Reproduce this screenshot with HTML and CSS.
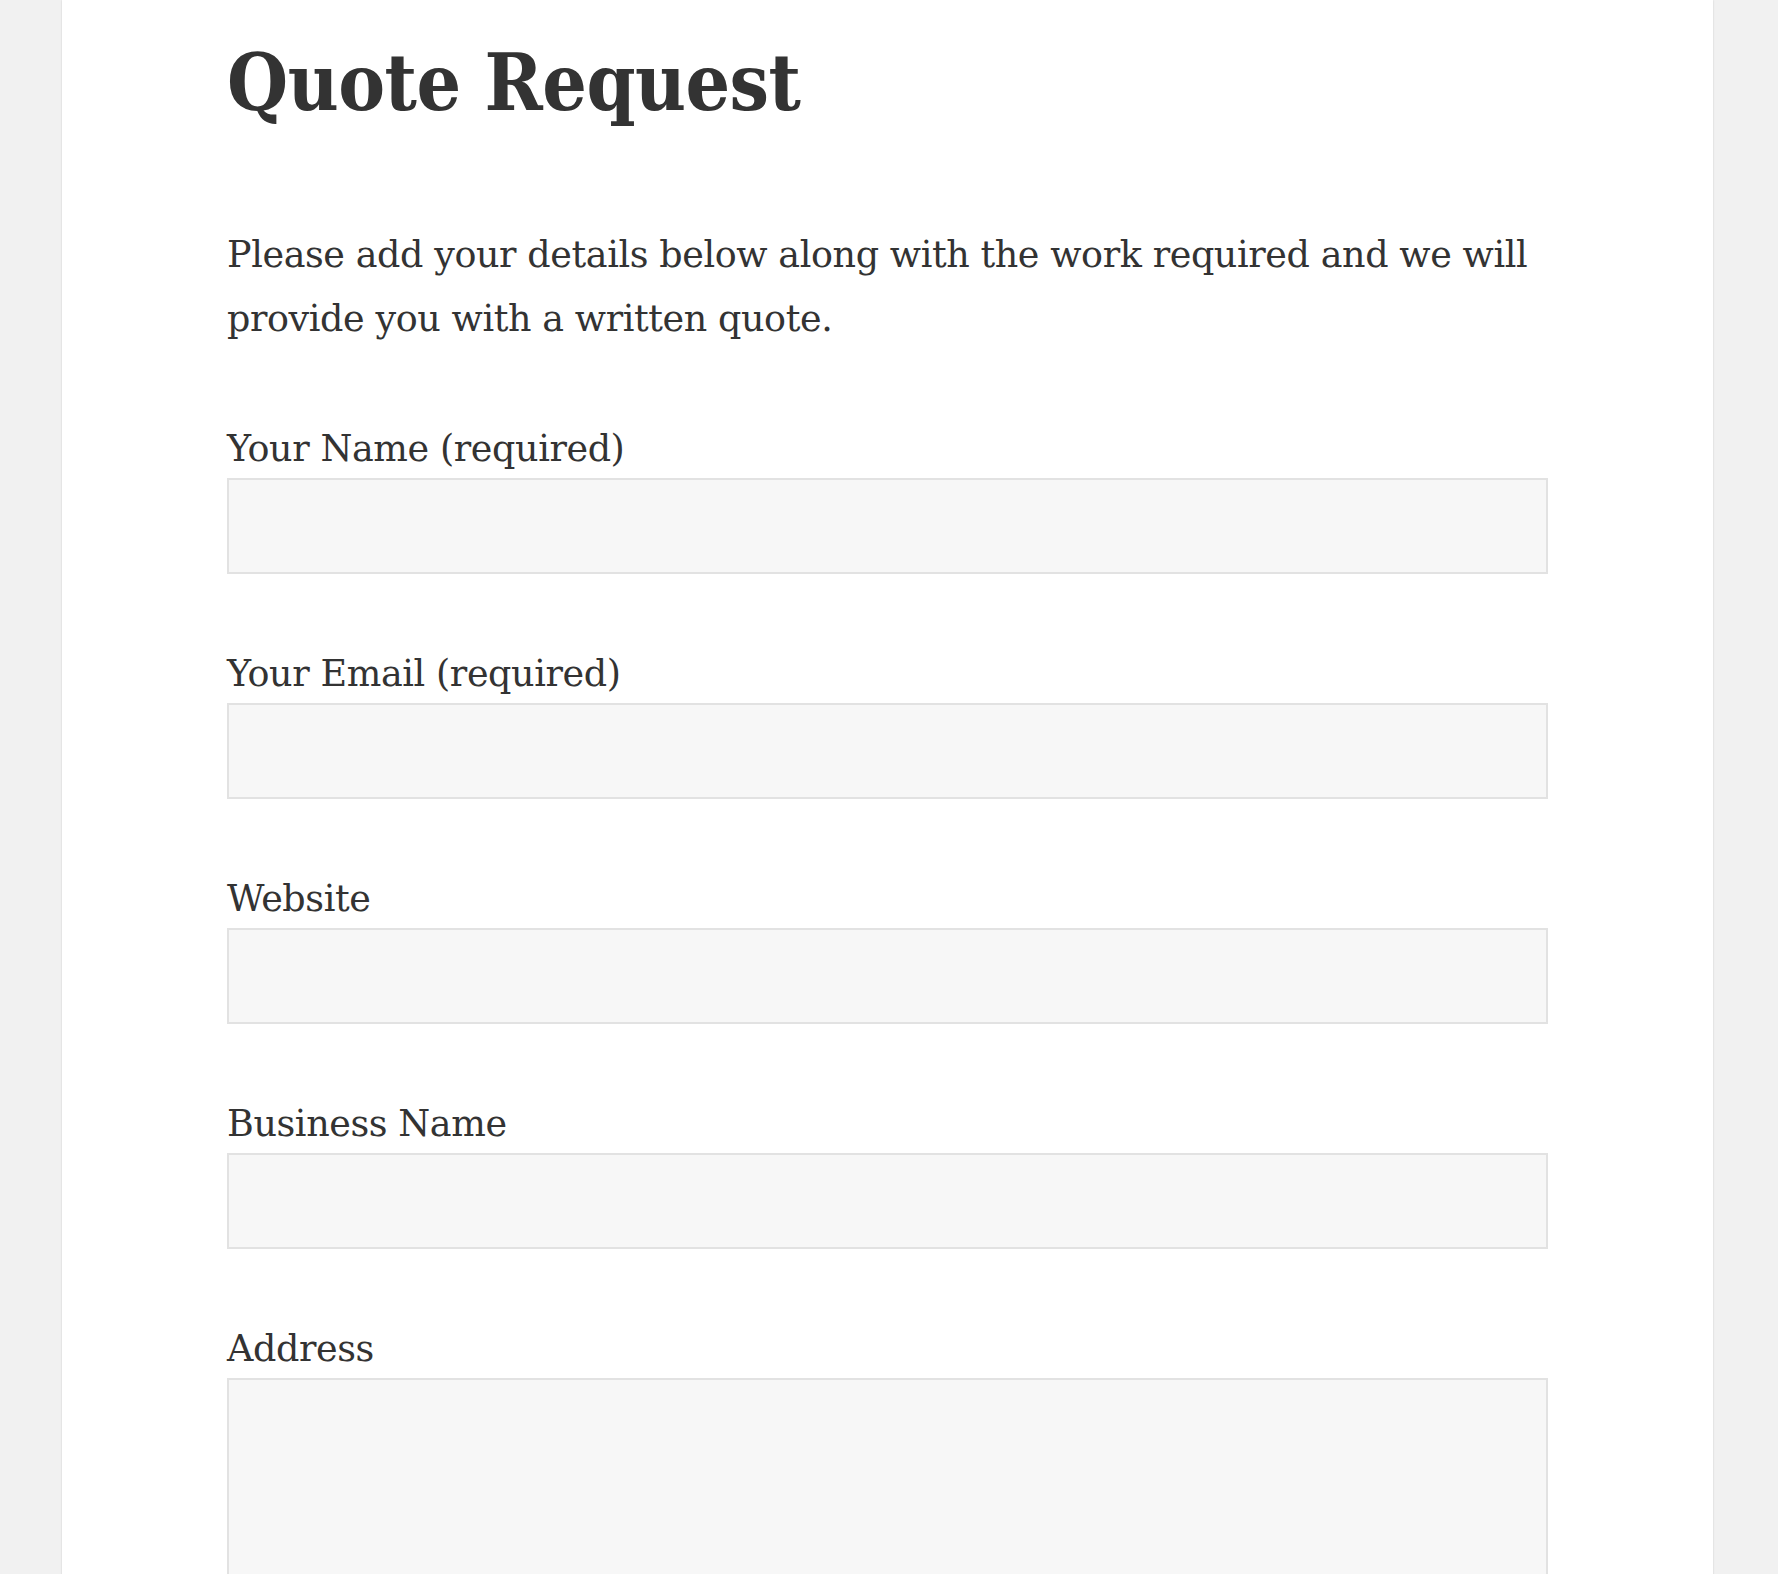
FILE: index.html
```html
<!DOCTYPE html>
<html lang="en">
<head>
<meta charset="utf-8">
<title>Quote Request</title>
<link rel="stylesheet" href="styles.css">
</head>
<body>
<main class="site-main">
  <article class="entry">
    <h1 class="entry-title">Quote Request</h1>
    <div class="entry-content">
      <p class="intro">Please add your details below along with the work required and we will provide you with a written quote.</p>
      <form class="quote-form">
        <div class="field">
          <label class="field-label" for="f-name">Your Name (required)</label>
          <input class="field-input" id="f-name" type="text">
        </div>
        <div class="field">
          <label class="field-label" for="f-email">Your Email (required)</label>
          <input class="field-input" id="f-email" type="email">
        </div>
        <div class="field">
          <label class="field-label" for="f-web">Website</label>
          <input class="field-input" id="f-web" type="text">
        </div>
        <div class="field">
          <label class="field-label" for="f-biz">Business Name</label>
          <input class="field-input" id="f-biz" type="text">
        </div>
        <div class="field">
          <label class="field-label" for="f-addr">Address</label>
          <textarea class="field-input field-textarea" id="f-addr"></textarea>
        </div>
      </form>
    </div>
  </article>
</main>
</body>
</html>
```

FILE: styles.css
```css
html, body {
  margin: 0;
  padding: 0;
}

body {
  background: #f1f1f1;
  color: #333333;
  font-family: "DejaVu Serif", "Liberation Serif", serif;
  overflow: hidden;
}

.site-main {
  margin-left: 62px;
  width: 1651px;
  background: #ffffff;
  box-shadow: 0 0 2px rgba(0, 0, 0, 0.15);
  min-height: 1700px;
}

.entry {
  padding: 36px 165px 0 165px;
}

.entry-title {
  margin: 0;
  font-family: "DejaVu Serif Condensed", "DejaVu Serif", serif;
  font-stretch: semi-condensed;
  font-size: 78px;
  line-height: 94px;
  font-weight: 700;
  letter-spacing: -0.5px;
  color: #333333;
}

.entry-content {
  padding-top: 93px;
}

.intro {
  margin: 0;
  font-size: 36.5px;
  line-height: 64px;
  letter-spacing: -0.4px;
}

.quote-form {
  padding-top: 69px;
}

.field {
  margin-bottom: 71px;
}

.field-label {
  display: block;
  font-size: 36.5px;
  line-height: 58px;
  letter-spacing: -0.4px;
}

.field-input {
  display: block;
  box-sizing: border-box;
  width: 100%;
  height: 96px;
  margin: 0;
  padding: 10px 14px;
  background: #f7f7f7;
  border: 2px solid #e2e2e2;
  border-radius: 0;
  font: inherit;
  outline: none;
}

.field-textarea {
  height: 330px;
  resize: none;
}
```
